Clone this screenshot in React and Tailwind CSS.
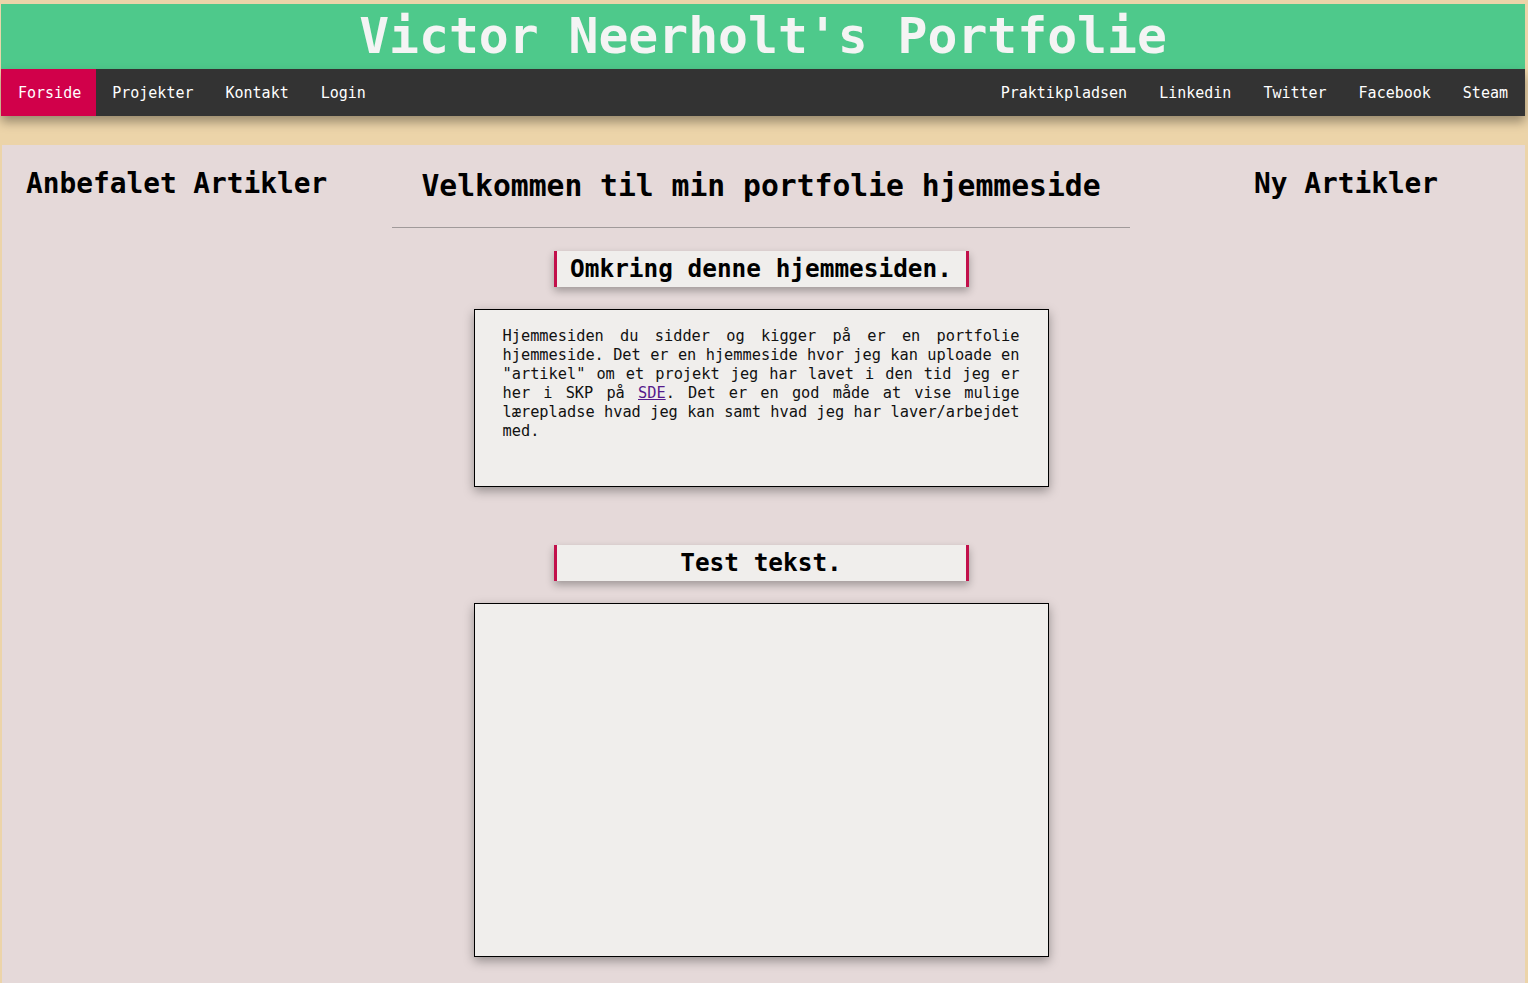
import React from 'react';

const leftLinks = ['Forside', 'Projekter', 'Kontakt', 'Login'];
const rightLinks = ['Praktikpladsen', 'Linkedin', 'Twitter', 'Facebook', 'Steam'];

function SectionTitle({ children }) {
    return (
        <div className="w-[415px] h-[36px] flex items-center justify-center bg-[#f0eeec] border-x-[3px] border-[#c2104b] shadow-[0_4px_8px_rgba(0,0,0,0.3)]">
            <h2 className="text-[24.4px] leading-none font-bold text-black">{children}</h2>
        </div>
    );
}

export default function App() {
    return (
        <div className="min-h-screen bg-[#ecd4a9] pt-1 pl-px pr-[3px] font-['DejaVu_Sans_Mono',monospace]">
            <header className="h-[65px] bg-[#4ec98b] flex items-center justify-center">
                <h1 className="text-[49.7px] leading-none font-bold text-[#f4f4f4]">Victor Neerholt's Portfolie</h1>
            </header>

            <nav className="h-[47px] pt-[2px] bg-[#333333] flex justify-between text-[15px] text-white shadow-[0_6px_10px_rgba(0,0,0,0.35)] relative">
                <ul className="flex -mt-[2px]">
                    {leftLinks.map((l, i) => (
                        <li
                            key={l}
                            className={
                                i === 0
                                    ? 'flex items-center pt-[2px] pl-[17px] pr-[15px] bg-[#d1004a]'
                                    : 'flex items-center pt-[2px] px-4'
                            }
                        >
                            {l}
                        </li>
                    ))}
                </ul>
                <ul className="flex">
                    {rightLinks.map(l => (
                        <li key={l} className="flex items-center px-4 last:pr-[17px]">{l}</li>
                    ))}
                </ul>
            </nav>

            <main className="mt-[29px] ml-px bg-[#e5d9d9] min-h-[838px] flex text-black">
                <aside className="w-[390px] pl-6 pt-[22px]">
                    <h3 className="text-[27.8px] leading-[34px] font-bold">Anbefalet Artikler</h3>
                </aside>

                <section className="w-[738px] flex flex-col items-center pt-[23px]">
                    <h2 className="text-[29.7px] leading-[36px] font-bold">Velkommen til min portfolie hjemmeside</h2>
                    <hr className="w-full mt-[23px] border-t border-[#a09a9a]" />

                    <div className="mt-[23px]">
                        <SectionTitle>Omkring denne hjemmesiden.</SectionTitle>
                    </div>
                    <div className="mt-[22px] w-[575px] h-[178px] bg-[#f0eeec] border border-black shadow-[0_4px_10px_rgba(0,0,0,0.35)] px-[28px] pt-[17px]">
                        <p className="text-[15.3px] leading-[19px] text-justify text-[#111]">
                            Hjemmesiden du sidder og kigger på er en portfolie hjemmeside. Det er en hjemmeside hvor jeg kan uploade en "artikel" om et projekt jeg har lavet i den tid jeg er her i SKP på{' '}
                            <a href="#" className="text-[#551a8b] underline">SDE</a>. Det er en god måde at vise mulige lærepladse hvad jeg kan samt hvad jeg har laver/arbejdet med.
                        </p>
                    </div>

                    <div className="mt-[58px]">
                        <SectionTitle>Test tekst.</SectionTitle>
                    </div>
                    <div className="mt-[22px] mb-6 w-[575px] h-[354px] bg-[#f0eeec] border border-black shadow-[0_4px_10px_rgba(0,0,0,0.35)]" />
                </section>

                <aside className="flex-1 pl-[124px] pt-[22px]">
                    <h3 className="text-[27.8px] leading-[34px] font-bold">Ny Artikler</h3>
                </aside>
            </main>
        </div>
    );
}
